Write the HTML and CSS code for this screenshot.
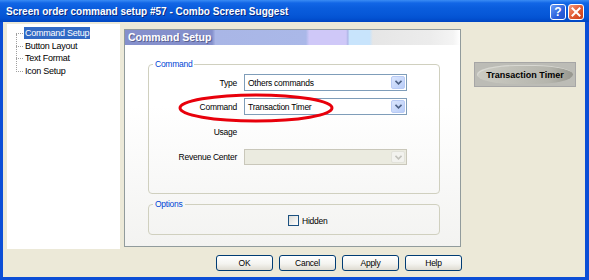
FILE: index.html
```html
<!DOCTYPE html>
<html lang="en">
<head>
  <meta charset="UTF-8" />
  <title>Screen order command setup #57</title>
  <link rel="stylesheet" href="styles.css">
</head>
<body>

  <div class="window">
    <div class="titlebar">
      <span class="title">Screen order command setup #57 - Combo Screen Suggest</span>
      <div class="caption-btns">
        <span class="cap-btn help">?</span>
        <span class="cap-btn close">
          <svg width="10" height="10" viewBox="0 0 10 10"><path d="M1.5 1.5 L8.5 8.5 M8.5 1.5 L1.5 8.5" stroke="#fff" stroke-width="2" stroke-linecap="square"/></svg>
        </span>
      </div>
    </div>

    <div class="client">
      <ul class="tree">
        <li class="sel"><span>Command Setup</span></li>
        <li><span>Button Layout</span></li>
        <li><span>Text Format</span></li>
        <li><span>Icon Setup</span></li>
      </ul>

      <div class="center">
        <div class="panel">
          <div class="panel-head">Command Setup</div>

          <fieldset class="group">
            <legend>Command</legend>
            <div class="form">
              <label>Type</label>
              <div class="combo"><span class="val">Others commands</span><span class="arrow"><svg width="7" height="5" viewBox="0 0 7 5"><path d="M0.5 0.8 L3.5 3.8 L6.5 0.8" fill="none" stroke="#4d6185" stroke-width="1.6"/></svg></span></div>

              <label>Command</label>
              <div class="combo"><span class="val">Transaction Timer</span><span class="arrow"><svg width="7" height="5" viewBox="0 0 7 5"><path d="M0.5 0.8 L3.5 3.8 L6.5 0.8" fill="none" stroke="#4d6185" stroke-width="1.6"/></svg></span></div>

              <label>Usage</label>
              <div></div>

              <label>Revenue Center</label>
              <div class="combo off"><span class="val"></span><span class="arrow"><svg width="7" height="5" viewBox="0 0 7 5"><path d="M0.5 0.8 L3.5 3.8 L6.5 0.8" fill="none" stroke="#c2c2bc" stroke-width="1.6"/></svg></span></div>

              <svg class="mark" width="158" height="30" viewBox="0 0 158 30"><ellipse cx="79" cy="15" rx="76" ry="13" fill="none" stroke="#e8000b" stroke-width="3"/></svg>
            </div>
          </fieldset>

          <fieldset class="group opts">
            <legend>Options</legend>
            <div class="check"><span class="box"></span>Hidden</div>
          </fieldset>
        </div>

        <div class="actions">
          <button class="btn">OK</button>
          <button class="btn">Cancel</button>
          <button class="btn">Apply</button>
          <button class="btn">Help</button>
        </div>
      </div>

      <div class="preview">
        <div class="pos-btn"><span>Transaction Timer</span></div>
      </div>
    </div>
  </div>

</body>
</html>
```

FILE: styles.css
```css
* {
  box-sizing: border-box;
}

body {
  margin: 0;
  width: 589px;
  height: 280px;
  overflow: hidden;
  font-family: "Liberation Sans", Arial, sans-serif;
  font-size: 8.5px;
  letter-spacing: -0.25px;
  color: #000;
  background: #ece9d8;
}

.window {
  width: 589px;
  height: 280px;
  display: flex;
  flex-direction: column;
}

/* title bar */
.titlebar {
  height: 22px;
  flex: none;
  display: flex;
  align-items: center;
  justify-content: space-between;
  padding: 0 5px 0 6px;
  background: linear-gradient(#3a8cf4 0, #1266e6 3px, #0a5ddd 8px, #0758d8 14px, #0352d2 18px, #0045c2 22px);
}

.title {
  font-weight: bold;
  font-size: 10px;
  letter-spacing: 0;
  color: #fff;
  text-shadow: 1px 1px 0 #0b2a80;
}

.caption-btns {
  display: flex;
  gap: 2px;
  margin-top: 1px;
}

.cap-btn {
  width: 16px;
  height: 16px;
  border: 1px solid #fff;
  border-radius: 3px;
  display: flex;
  align-items: center;
  justify-content: center;
  color: #fff;
  font-weight: bold;
  font-size: 12px;
  letter-spacing: 0;
}

.help {
  background: linear-gradient(135deg, #6b9ff8, #2a5fdc 60%, #1e52d0);
}

.close {
  background: linear-gradient(135deg, #f39a7f, #e25a32 50%, #c93c18);
}

/* client area */
.client {
  flex: 1;
  display: flex;
  align-items: flex-start;
  border: solid #0b4ed6;
  border-width: 0 4px 3px 3px;
  background: #ece9d8;
}

.tree {
  position: relative;
  width: 113px;
  height: 225px;
  margin: 2px 0 0 4px;
  padding: 3px 0 0 17px;
  list-style: none;
  background: #fff;
  font-size: 9px;
}

.tree::before {
  content: "";
  position: absolute;
  left: 9px;
  top: 10px;
  height: 38px;
  border-left: 1px dotted #a0a0a0;
}

.tree li {
  position: relative;
  height: 12.7px;
  line-height: 12.7px;
  white-space: nowrap;
}

.tree li::before {
  content: "";
  position: absolute;
  left: -8px;
  top: 6px;
  width: 7px;
  border-top: 1px dotted #a0a0a0;
}

.tree li span {
  padding: 1px 1px;
}

.tree .sel span {
  background: #316ac5;
  color: #fff;
}

.center {
  margin-left: 4px;
  display: flex;
  flex-direction: column;
}

.panel {
  width: 337px;
  height: 218px;
  margin-top: 7px;
  border: 1px solid #919b9c;
  background: linear-gradient(#fff 35%, #f3f3f1);
}

.panel-head {
  height: 15px;
  line-height: 15px;
  padding-left: 3px;
  font-weight: bold;
  font-size: 10.5px;
  letter-spacing: 0;
  color: #fff;
  text-shadow: 1px 1px 0 #5a6090;
  background: linear-gradient(to right, #8590cc 0, #8590cc 26%, #a9b6e6 27%, #aab8e8 54%, #cfc8f8 55%, #cfc8f8 66%, #b0b8e8 66.5%, #c8e4fc 67%, #c8e4fc 73%, #e6e6e6 74%, #ececec 91%, #f4f4f4 98%, #fff 100%);
}

.group {
  width: 292px;
  margin: 14px 0 0 23px;
  padding: 4px 0 28px 0;
  border: 1px solid #d0d0bf;
  border-radius: 4px;
}

.group legend {
  margin-left: 4px;
  padding: 0 2px;
  line-height: 11px;
  color: #0046d5;
}

.form {
  position: relative;
  display: grid;
  grid-template-columns: 88px 163px;
  grid-template-rows: 17px 17px 20px 16px;
  column-gap: 7px;
  row-gap: 7px;
}

.form label {
  text-align: right;
  align-self: center;
}

.combo {
  display: flex;
  align-items: stretch;
  border: 1px solid #7f9db9;
  background: #fff;
}

.combo .val {
  flex: 1;
  padding-left: 3px;
  align-self: center;
}

.arrow {
  width: 14px;
  margin: 1px;
  display: flex;
  align-items: center;
  justify-content: center;
  border: 1px solid #b9cbf5;
  border-radius: 2px;
  background: linear-gradient(135deg, #dbe6fd, #b9cdf8);
}

.combo.off {
  border-color: #c9c7ba;
  background: #ebebe0;
}

.combo.off .arrow {
  border-color: #e2e2da;
  background: #f2f2ee;
}

.mark {
  position: absolute;
  left: 28px;
  top: 19px;
  pointer-events: none;
}

.opts {
  margin-top: 5px;
  padding: 5px 0 8px 0;
}

.check {
  display: flex;
  align-items: center;
  gap: 3px;
  height: 11px;
  margin-left: 139px;
}

.box {
  width: 11px;
  height: 11px;
  border: 1px solid #1c5180;
  background: linear-gradient(135deg, #dcdcd7, #fff);
}

/* dialog buttons */
.actions {
  display: flex;
  justify-content: flex-end;
  gap: 6px;
  margin-top: 8px;
  margin-right: -1px;
}

.btn {
  width: 57px;
  height: 16px;
  padding: 0;
  border: 1px solid #003c74;
  border-radius: 3px;
  font: inherit;
  letter-spacing: inherit;
  line-height: 14px;
  color: #000;
  background: linear-gradient(#fff, #f4f4f0 55%, #dedbd1);
}

/* preview */
.preview {
  margin-left: 13px;
  padding-top: 40px;
}

.pos-btn {
  width: 102px;
  height: 25px;
  padding: 2px;
  border: 1px solid #a6a6a6;
  background: #bcbcb6;
}

.pos-btn span {
  display: flex;
  align-items: center;
  justify-content: center;
  height: 100%;
  border-radius: 40% / 50%;
  font-weight: bold;
  font-size: 9px;
  letter-spacing: 0;
  color: #000;
  background: linear-gradient(to right, #cbcbc3, #b5b5ad 75%, #96968e);
  box-shadow: inset 1px 1px 0 #d8d8d2;
}
```
